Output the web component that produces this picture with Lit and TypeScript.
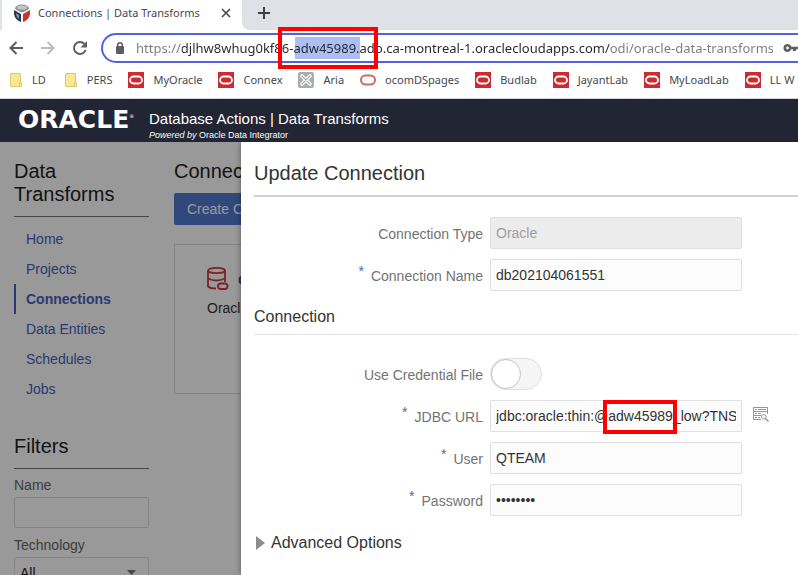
import { LitElement, html, css, svg, nothing } from "lit";
import { customElement } from "lit/decorators.js";

interface Bookmark { label: string; kind: "folder" | "oracle" | "aria" | "outline"; }

const BOOKMARKS: Bookmark[] = [
  { label: "LD", kind: "folder" },
  { label: "PERS", kind: "folder" },
  { label: "MyOracle", kind: "oracle" },
  { label: "Connex", kind: "oracle" },
  { label: "Aria", kind: "aria" },
  { label: "ocomDSpages", kind: "outline" },
  { label: "Budlab", kind: "oracle" },
  { label: "JayantLab", kind: "oracle" },
  { label: "MyLoadLab", kind: "oracle" },
  { label: "LL W", kind: "oracle" },
];

const NAV = ["Home", "Projects", "Connections", "Data Entities", "Schedules", "Jobs"];

const bookmarkIcon = (kind: Bookmark["kind"]) => {
  switch (kind) {
    case "folder":
      return svg`<path d="M3.500 1.500h10v9h1v4h-11z" fill="#f8e795" stroke="#dccb69"/><path d="M12.500 14v-3.500h1.500" fill="none" stroke="#dccb69"/>`;
    case "oracle":
      return svg`<rect width="16" height="16" fill="#cb2b31"/><rect x="2" y="4.500" width="12" height="7" rx="3.500" fill="none" stroke="#fff" stroke-width="1.800"/>`;
    case "aria":
      return svg`<rect width="16" height="16" rx="2" fill="#a9acae"/><path d="M4 4l8 8M12 4l-8 8" stroke="#fff" stroke-width="3.600" stroke-linecap="round"/><path d="M4 4l8 8M12 4l-8 8" stroke="#a9acae" stroke-width="1.200" stroke-linecap="round"/>`;
    default:
      return svg`<rect x="1" y="3.500" width="14" height="9" rx="4.500" fill="none" stroke="#cf6b5e" stroke-width="2"/>`;
  }
};

@customElement("browser-chrome")
export class BrowserChrome extends LitElement {
  static styles = css`
    :host { display: block; font-family: "Noto Sans", "Open Sans", sans-serif; color: #45484d; background: #fff; border-bottom: 1px solid #d5d7db; }
    .strip { display: flex; height: 30px; background: #dee1e6; }
    .tab { display: flex; align-items: center; box-sizing: border-box; width: 240px; margin-left: 2px; padding: 0 8px 4px 12px; background: #fff; font-size: 11px; }
    .tab span { flex: 1; margin-left: 8px; white-space: nowrap; }
    button { display: flex; align-items: center; justify-content: center; padding: 0; border: 0; background: none; color: #5f6368; }
    .new { width: 44px; height: 30px; padding-bottom: 4px; border-radius: 0 0 0 8px; background: #dee1e6; }
    .corner { display: flex; background: #fff; }
    .bar { display: flex; align-items: center; height: 35px; }
    .tool { width: 32px; height: 32px; }
    .omni { display: flex; align-items: center; flex: 1; min-width: 0; box-sizing: border-box; height: 30px; margin-left: 5px; padding-left: 11px; border: 2px solid #4f63dc; border-right: 0; border-radius: 15px 0 0 15px; }
    .tools { display: flex; }
    .url { flex: 1; min-width: 0; height: 22px; margin: 0 10px; padding: 0; border: 0; outline: 0; font: 13px "Noto Sans", sans-serif; color: transparent;
      background-image: linear-gradient(90deg, #777b80 46px, #25272b 46px, #25272b 474px, #777b80 474px), linear-gradient(#adbff2, #adbff2);
      background-repeat: no-repeat; background-size: 100% 100%, 65px 100%; background-position: 0 0, 159px 0;
      background-clip: text, padding-box; }
    .marks { display: flex; align-items: center; box-sizing: border-box; height: 33px; overflow: hidden; padding: 0 0 3px 7px; font-size: 11px; gap: 16px; }
    .marks a { display: flex; align-items: center; gap: 9px; flex: none; color: inherit; text-decoration: none; }
  `;
  render() {
    return html`
      <div class="strip">
        <div class="tab">
          <svg width="16" height="18" viewBox="0 0 16 18"><ellipse cx="8" cy="4.500" rx="7" ry="4" fill="#8f9294"/><ellipse cx="8" cy="3.500" rx="5" ry="2" fill="#c4c6c8"/><path d="M0 6l7 4v8q-6-2-7-8z" fill="#25364f"/><path d="M2 9l3 2v4q-3-2-3-6z" fill="#7f93ae"/><path d="M16 6l-7 4v8q6-2 7-8z" fill="#cf2f2d"/><path d="M0 5l8 4.500 8-4.500M8 9.500v8" fill="none" stroke="#fff"/></svg>
          <span>Connections | Data Transforms</span>
          <button aria-label="Close tab"><svg width="16" height="16"><path d="M4 4l8 8M12 4l-8 8" stroke="#45484d" stroke-width="1.600"/></svg></button>
        </div>
        <div class="corner"><button class="new" aria-label="New tab"><svg width="14" height="14"><path d="M7 1v12M1 7h12" stroke="#3c4043" stroke-width="2"/></svg></button></div>
      </div>
      <div class="bar">
        <div class="tools">
          <button class="tool" aria-label="Back"><svg width="16" height="16"><path d="M15 8H2.500M8.500 2L2.500 8l6 6" fill="none" stroke="#5a5e63" stroke-width="2"/></svg></button>
          <button class="tool" aria-label="Forward"><svg width="16" height="16"><path d="M1 8h12.500M7.500 2l6 6-6 6" fill="none" stroke="#b9bbbe" stroke-width="2"/></svg></button>
          <button class="tool" aria-label="Reload"><svg width="16" height="16"><path d="M13.600 10a6 6 0 1 1-1.300-6.200" fill="none" stroke="#5a5e63" stroke-width="2"/><path d="M15 1v6.500H8.500z" fill="#5a5e63"/></svg></button>
        </div>
        <div class="omni">
          <svg width="12" height="14"><rect x="2" y="5" width="8" height="8" rx="1" fill="#5a5e63"/><path d="M3.700 6V4a2.300 2.300 0 0 1 4.600 0v2" fill="none" stroke="#5a5e63" stroke-width="1.500"/></svg>
          <input class="url" aria-label="Address" value="https://djlhw8whug0kf86-adw45989.adb.ca-montreal-1.oraclecloudapps.com/odi/oracle-data-transforms" />
          <svg width="15" height="10"><path d="M4.500 1a4 4 0 1 0 3.800 5.200H10V8h3V6.200h2V3.800H8.300A4 4 0 0 0 4.500 1zm0 2.600a1.400 1.400 0 1 1 0 2.800 1.400 1.400 0 0 1 0-2.800z" fill="#5a5e63"/></svg>
        </div>
      </div>
      <nav class="marks" aria-label="Bookmarks">
        ${BOOKMARKS.map((b) => html`<a href="#"><svg width="16" height="16">${bookmarkIcon(b.kind)}</svg>${b.label}</a>`)}
      </nav>
    `;
  }
}

@customElement("update-connection")
export class UpdateConnection extends LitElement {
  static styles = css`
    :host { display: block; background: #fff; color: #333; font: 14px/20px "Liberation Sans", Arial, sans-serif; box-shadow: 0 0 6px rgba(0, 0, 0, 0.4); padding-left: 13px; }
    h2 { margin: 0; padding: 19px 0 10px; font-size: 20px; line-height: 24px; font-weight: 400; border-bottom: 2px solid #d1d1d1; }
    h3 { margin: 0; padding-bottom: 7px; font-size: 16px; line-height: 20px; font-weight: 400; border-bottom: 1px solid #e4e4e4; }
    .form { display: grid; grid-template-columns: 229px 252px auto; column-gap: 7px; row-gap: 10px; }
    .form.top { padding: 20px 0 16px; }
    .form.low { padding: 23px 0 17px; }
    .row { display: contents; }
    label { grid-column: 1; align-self: center; justify-self: end; padding-top: 2px; color: #737373; }
    .req::before { content: "*"; margin-right: 7px; color: #4a67b0; position: relative; top: -5px; }
    input.text { box-sizing: border-box; height: 32px; width: 100%; padding: 0 5px; border: 1px solid #dfdfdf; border-radius: 2px; background: #fcfcfc; color: #333; font: inherit; grid-column: 2; }
    input.text:disabled { background: #ececec; color: #9e9e9e; }
    .switch { appearance: none; grid-column: 2; margin: 0; box-sizing: border-box; width: 52px; height: 32px; border: 1px solid #dfdfdf; border-radius: 16px; background: #f5f5f5; display: flex; align-items: center; }
    .switch::before { content: ""; box-sizing: border-box; width: 30px; height: 30px; border-radius: 50%; background: #fff; border: 1px solid #c4c4c4; }
    .lookup { align-self: center; justify-self: start; margin: 0 0 4px 4px; padding: 0; border: 0; background: none; line-height: 0; }
    summary { display: flex; align-items: center; gap: 6px; font-size: 16px; list-style: none; padding-left: 2px; }
  `;
  private field(label: string, value: string, opts: { required?: boolean; disabled?: boolean; type?: string; lookup?: boolean } = {}) {
    const id = label.toLowerCase().replace(/ /g, "-");
    return html`<div class="row">
      <label class=${opts.required ? "req" : ""} for=${id}>${label}</label>
      <input class="text" id=${id} type=${opts.type ?? "text"} .value=${value} ?disabled=${opts.disabled ?? false} />
      ${opts.lookup
        ? html`<button class="lookup" aria-label="Build URL"><svg width="16" height="16" fill="none" stroke="#949494"><path d="M14.500 8V1.500H.5v12H8M.5 5.500h14M.5 9.500H8"/><path d="M2 3.500h2m1 0h8M2 7.500h2m1 0h3M2 11.500h2m1 0h2"/><circle cx="10.800" cy="10.800" r="2.300"/><path d="M12.500 12.500l3 3" stroke-width="1.400"/></svg></button>`
        : nothing}
    </div>`;
  }
  render() {
    return html`
      <h2>Update Connection</h2>
      <div class="form top">
        ${this.field("Connection Type", "Oracle", { disabled: true })}
        ${this.field("Connection Name", "db202104061551", { required: true })}
      </div>
      <h3>Connection</h3>
      <div class="form low">
        <div class="row"><label for="cred">Use Credential File</label><input id="cred" class="switch" type="checkbox" role="switch" /></div>
        ${this.field("JDBC URL", "jdbc:oracle:thin:@adw45989_low?TNS_ADMIN=/wallet", { required: true, lookup: true })}
        ${this.field("User", "QTEAM", { required: true })}
        ${this.field("Password", "password", { required: true, type: "password" })}
      </div>
      <details><summary><svg width="9" height="14"><path d="M0 0l9 7-9 7z" fill="#8c8c8c"/></svg>Advanced Options</summary></details>
    `;
  }
}

@customElement("app-root")
export class AppRoot extends LitElement {
  static styles = css`
    :host { display: flex; flex-direction: column; position: relative; height: 100vh; overflow: hidden; font: 14px/20px "Liberation Sans", Arial, sans-serif; background: #fff; }
    .head { display: flex; height: 43px; flex: none; color: #fff; background: #222533; box-sizing: border-box; padding: 10px 0 0 18px; gap: 12px; }
    .logo { width: 119px; flex: none; white-space: nowrap; font: 700 25px/22px "DejaVu Sans", sans-serif; }
    .logo sup { font-size: 5px; line-height: 0; vertical-align: 10px; font-weight: 400; }
    .product { font-size: 15px; line-height: 20px; }
    .powered { font-size: 9px; line-height: 13px; }
    .page { position: relative; display: flex; flex: 1; min-height: 0; overflow: hidden; }
    aside { flex: none; box-sizing: border-box; width: 149px; padding: 18px 0 0 14px; }
    h1, h2 { margin: 0; font-size: 20px; line-height: 23px; font-weight: 400; color: #222; }
    .rule { padding-bottom: 10px; border-bottom: 1px solid #777; }
    nav { display: flex; flex-direction: column; margin: 7px 0 31px; }
    nav a { line-height: 30px; padding-left: 10px; border-left: 2px solid transparent; color: #4561c0; text-decoration: none; }
    nav a.on { font-weight: 700; border-color: #4561c0; }
    .flabel { display: block; margin: 6px 0 2px; color: #666; }
    .f { display: block; box-sizing: border-box; width: 100%; height: 31px; margin-bottom: 7px; padding: 0 5px; border: 1px solid #ddd; border-radius: 2px; background: transparent; font: inherit; color: #222; }
    .pick { display: grid; align-items: center; }
    .pick > * { grid-area: 1 / 1; }
    .pick select { appearance: none; margin: 0; }
    .pick svg { justify-self: end; margin-right: 13px; }
    main { flex: 1; min-width: 0; padding: 18px 0 0 25px; }
    .create { display: block; margin: 10px 0 19px; height: 32px; padding: 0 13px; border: 0; border-radius: 2px; background: #5078cf; color: #fff; font: inherit; }
    .card { box-sizing: border-box; width: 260px; height: 150px; padding: 22px 32px; border: 1px solid #ddd; color: #333; }
    .top { display: flex; align-items: center; gap: 9px; margin-bottom: 8px; }
    .top a { color: #34509f; font-weight: 700; text-decoration: none; }
    .scrim { position: absolute; inset: 0; background: rgba(0, 0, 0, 0.4); }
    update-connection { position: absolute; top: 0; right: 0; bottom: 0; left: 241px; }
    .mark { position: absolute; box-sizing: border-box; border: 4px solid #f00; pointer-events: none; }
    .host { left: 278px; top: 27px; width: 100px; height: 42px; }
    .jdbc { left: 603px; top: 400px; width: 74px; height: 34px; }
  `;
  render() {
    return html`
      <browser-chrome></browser-chrome>
      <header class="head">
        <div class="logo">ORACLE<sup>®</sup></div>
        <div><div class="product">Database Actions | Data Transforms</div><div class="powered"><em>Powered by</em> Oracle Data Integrator</div></div>
      </header>
      <div class="page">
        <aside>
          <h1 class="rule">Data Transforms</h1>
          <nav>${NAV.map((n) => html`<a href="#" class=${n === "Connections" ? "on" : ""}>${n}</a>`)}</nav>
          <h2 class="rule">Filters</h2>
          <label class="flabel" for="name">Name</label>
          <input class="f" id="name" />
          <label class="flabel" for="tech">Technology</label>
          <div class="pick"><select class="f" id="tech"><option>All</option></select><svg width="9" height="6"><path d="M0 0h9L4.500 5z" fill="#777"/></svg></div>
        </aside>
        <main>
          <h2>Connections</h2>
          <button class="create">Create Connection</button>
          <article class="card">
            <div class="top">
              <svg width="22" height="23" fill="none" stroke="#cf3a3f" stroke-width="1.800"><ellipse cx="9.500" cy="3.500" rx="8.500" ry="2.600"/><path d="M1 3.500v16q2 2 8 2M18 3.500V15M1 11.500q8 4 17 0"/><rect x="11" y="16.500" width="9.500" height="5.500" rx="2.700"/></svg>
              <a href="#">db202104061551</a>
            </div>
            Oracle
          </article>
        </main>
        <div class="scrim"></div>
        <update-connection role="dialog" aria-label="Update Connection"></update-connection>
      </div>
      <div class="mark host"></div>
      <div class="mark jdbc"></div>
    `;
  }
}
